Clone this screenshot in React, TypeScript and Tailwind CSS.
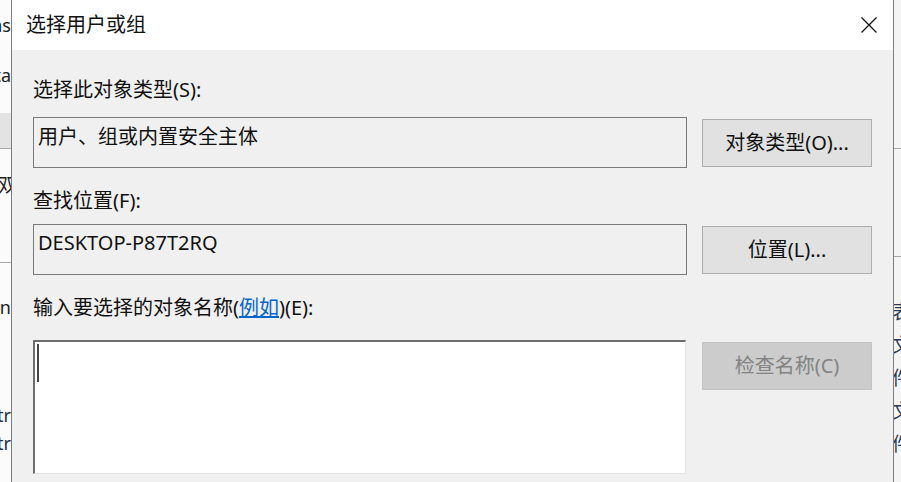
import React from "react";

const font = {
  fontFamily: '"Noto Sans", "Noto Sans CJK SC", sans-serif',
};

function CloseIcon() {
  return (
    <svg width="18" height="16" viewBox="0 0 18 16" fill="none">
      <path d="M1.5 0.5 L16.5 15.5 M16.5 0.5 L1.5 15.5" stroke="#111" strokeWidth="1.3" />
    </svg>
  );
}

function LeftStrip() {
  return (
    <div className="w-[11px] shrink-0 overflow-hidden bg-[#fbfbfb] text-[18px] leading-none text-[#222] flex flex-col">
      <div className="h-[50px] shrink-0 flex items-center justify-end">
        <span className="whitespace-nowrap">Programs</span>
      </div>
      <div className="h-[50px] shrink-0 flex items-center justify-end">
        <span className="whitespace-nowrap">Data</span>
      </div>
      <div className="h-[13px] shrink-0" />
      <div className="h-[35px] shrink-0 bg-[#e3e3e3]" />
      <div className="h-px shrink-0 bg-[#a8a8a8]" />
      <div className="h-[113px] shrink-0 flex items-start justify-end pt-[27px]">
        <span className="whitespace-nowrap -mr-[6px] text-[19px]">控制双</span>
      </div>
      <div className="h-px shrink-0 bg-[#a8a8a8]" />
      <div className="flex flex-col items-end pt-[35px]">
        <span className="whitespace-nowrap">Ran</span>
        <span className="whitespace-nowrap mt-[90px] text-[#1e2f4a]">Str</span>
        <span className="whitespace-nowrap mt-[10px] text-[#1e2f4a]">Str</span>
      </div>
    </div>
  );
}

function RightStrip() {
  const rows = ["表", "文", "件", "文", "件"];
  return (
    <div className="flex-1 overflow-hidden bg-[#f4f4f4] text-[19px] leading-none text-[#2a3a55] flex flex-col">
      <div className="h-[148px] shrink-0" />
      <div className="h-px shrink-0 bg-[#a8a8a8]" />
      <div className="h-[107px] shrink-0" />
      <div className="h-px shrink-0 bg-[#a8a8a8]" />
      <div className="flex flex-col pt-[46px] gap-[14px]">
        {rows.map((r, i) => (
          <span key={i} className="whitespace-nowrap -ml-[2px] h-[19px]">
            {r}
          </span>
        ))}
      </div>
    </div>
  );
}

function ReadBox({ text, pt }: { text: string; pt: string }) {
  return (
    <div
      className={`w-[654px] h-[51px] border border-[#7a7a7a] bg-[#f0f0f0] px-[4px] text-[20px] leading-[26px] text-[#111] ${pt}`}
    >
      {text}
    </div>
  );
}

function Btn({ children, disabled }: { children: React.ReactNode; disabled?: boolean }) {
  return (
    <div
      className={
        disabled
          ? "w-[170px] h-[48px] mt-[2px] flex items-center justify-center bg-[#cccccc] border border-[#c4c4c4] text-[20px] text-[#838383]"
          : "w-[170px] h-[48px] mt-[2px] flex items-center justify-center bg-[#e1e1e1] border border-[#adadad] text-[20px] text-[#111]"
      }
    >
      {children}
    </div>
  );
}

export default function App() {
  return (
    <div className="w-[901px] h-[482px] overflow-hidden flex bg-white" style={font}>
      <LeftStrip />
      <div className="w-[883px] shrink-0 flex flex-col border-x border-[#7d7d7d] bg-[#f0f0f0]">
        <div className="h-[50px] shrink-0 bg-white flex items-center justify-between pl-[14px] pr-[15px]">
          <span className="text-[20px] leading-none text-[#111]">选择用户或组</span>
          <CloseIcon />
        </div>
        <div className="flex flex-col pl-[21px]">
          <div className="mt-[27px] text-[20px] leading-[26px] text-[#111]">选择此对象类型(S):</div>
          <div className="mt-[14px] flex gap-[15px]">
            <ReadBox text="用户、组或内置安全主体" pt="pt-[6px]" />
            <Btn>对象类型(O)...</Btn>
          </div>
          <div className="mt-[20px] text-[20px] leading-[26px] text-[#111]">查找位置(F):</div>
          <div className="mt-[10px] flex gap-[15px]">
            <ReadBox text="DESKTOP-P87T2RQ" pt="pt-[5px]" />
            <Btn>位置(L)...</Btn>
          </div>
          <div className="mt-[20px] text-[20px] leading-[26px] text-[#111]">
            输入要选择的对象名称(<span className="text-[#0066cc] underline">例如</span>)(E):
          </div>
          <div className="mt-[19px] flex gap-[16px]">
            <div className="w-[653px] h-[134px] bg-white border-t-2 border-l-2 border-t-[#6d6d6d] border-l-[#6d6d6d] border-r border-b border-r-[#e3e3e3] border-b-[#e3e3e3] pl-[2px] pt-[2px]">
              <div className="w-[2px] h-[38px] bg-[#444]" />
            </div>
            <Btn disabled>检查名称(C)</Btn>
          </div>
        </div>
      </div>
      <RightStrip />
    </div>
  );
}
